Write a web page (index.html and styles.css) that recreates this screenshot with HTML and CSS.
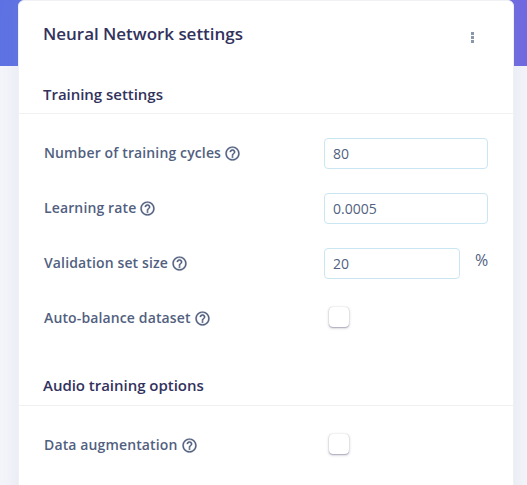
FILE: index.html
```html
<!DOCTYPE html>
<html lang="en">
<head>
<meta charset="utf-8">
<title>Neural Network settings</title>
<link rel="stylesheet" href="styles.css">
</head>
<body>
<svg class="defs" width="0" height="0"><symbol id="help" viewBox="0 0 24 24"><path d="M11 18h2v-2h-2v2zm1-16C6.480 2 2 6.480 2 12s4.480 10 10 10 10-4.480 10-10S17.520 2 12 2zm0 18c-4.410 0-8-3.590-8-8s3.590-8 8-8 8 3.590 8 8-3.590 8-8 8zm0-14c-2.210 0-4 1.790-4 4h2c0-1.100.9-2 2-2s2 .9 2 2c0 2-3 1.750-3 5h2c0-2.250 3-2.500 3-5 0-2.210-1.790-4-4-4z"/></symbol></svg>
<main class="card">
  <header class="card-header"><h1>Neural Network settings</h1><button class="menu" aria-label="Menu"><i></i><i></i><i></i></button></header>
  <h2>Training settings</h2>
  <section class="group">
    <div class="row"><label>Number of training cycles</label><svg class="help"><use href="#help"/></svg><input class="field" value="80"></div>
    <div class="row"><label>Learning rate</label><svg class="help"><use href="#help"/></svg><input class="field" value="0.0005"></div>
    <div class="row"><label>Validation set size</label><svg class="help"><use href="#help"/></svg><input class="field short" value="20"><span class="unit">%</span></div>
    <div class="row"><label>Auto-balance dataset</label><svg class="help"><use href="#help"/></svg><span class="check"></span></div>
  </section>
  <h2 class="audio">Audio training options</h2>
  <section class="group">
    <div class="row"><label>Data augmentation</label><svg class="help"><use href="#help"/></svg><span class="check"></span></div>
  </section>
</main>
</body>
</html>
```
FILE: styles.css
```css
* { box-sizing: border-box; }
body { margin: 0; height: 485px; overflow: hidden; padding: 0 13px 0 18px; font-family: "Open Sans", sans-serif; background: linear-gradient(90deg, #5e72e4, #7069e2) 0 0 / 100% 66px no-repeat #f4f5fb; }
.defs { display: none; }
.card { height: 500px; background: #fff; border: 1px solid #f0f1f4; border-radius: 6px; box-shadow: 0 0 20px rgba(136,152,170,.15); }
.card-header { height: 74px; padding: 21px 37px 0 24px; display: flex; justify-content: space-between; }
h1 { margin: 0; font-size: 17px; line-height: 24px; font-weight: 600; letter-spacing: -.03px; color: #32325d; }
.menu { border: 0; padding: 0; background: none; width: 8px; height: 11px; margin-top: 10px; display: flex; flex-direction: column; align-items: center; gap: 1px; }
.menu i { width: 3px; height: 3px; background: #8898aa; }
h2 { margin: 0; height: 39px; padding: 8px 24px 0; border-bottom: 1px solid #f0f1f3; font-size: 15px; line-height: 22px; font-weight: 600; letter-spacing: -.03px; color: #32325d; }
.group { padding: 12px 25px 0; }
.row { height: 55px; display: flex; align-items: center; color: #525f7f; font-size: 14px; }
label { font-weight: 600; white-space: nowrap; letter-spacing: .13px; margin-bottom: 2px; }
.help { width: 17px; height: 17px; margin: 0 0 1px 3px; fill: #525f7f; stroke: #525f7f; stroke-width: .3px; }
.field { margin: 0 0 0 auto; width: 164px; height: 31px; padding: 0 8px; border: 1px solid #cbe6f3; border-radius: 4px; font: 14px "Open Sans", sans-serif; color: #525f7f; }
.short { width: 136px; }
.unit { width: 28px; padding-left: 15px; font-size: 16px; margin-bottom: 7px; }
.check { width: 20px; height: 20px; margin: 0 139px 3px auto; border-radius: 4px; box-shadow: 0 0 1px rgba(50,50,93,.25), 0 1px 3px rgba(50,50,93,.3), 0 1px 1px rgba(50,50,93,.2); }
.audio { height: 40px; margin-top: 20px; }
```
